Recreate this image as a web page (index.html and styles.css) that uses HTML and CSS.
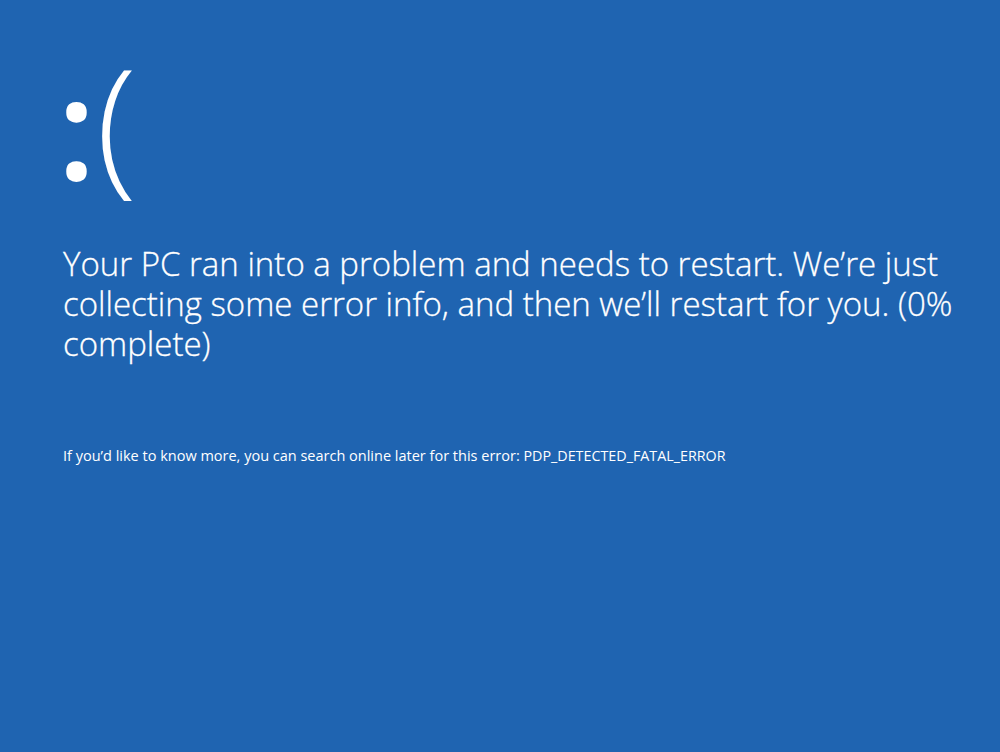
FILE: index.html
```html
<!DOCTYPE html>
<html lang="en">
<head>
  <meta charset="UTF-8">
  <meta name="viewport" content="width=device-width, initial-scale=1.0">
  <title>Your PC ran into a problem</title>
  <link rel="stylesheet" href="styles.css">
</head>
<body>
  <div class="screen">
    <div class="face"><span class="eyes">:</span><span class="mouth">(</span></div>
    <p class="message">Your PC ran into a problem and needs to restart. We’re just collecting some error info, and then we’ll restart for you. (0% complete)</p>
    <p class="details">If you’d like to know more, you can search online later for this error: <span class="code">PDP_DETECTED_FATAL_ERROR</span></p>
  </div>
</body>
</html>
```

FILE: styles.css
```css
body {
  margin: 0;
  background-color: #1f64b1;
  color: #fff;
  font-family: 'Open Sans', sans-serif;
  height: 100vh;
}
.screen {
  padding: 44px 30px 0 63px;
}
.face {
  font-size: 150px;
  line-height: 1;
  height: 200px;
  white-space: nowrap;
}
.eyes {
  font-size: 142px;
  font-weight: 600;
  margin-left: -6px;
  vertical-align: -3px;
}
.mouth {
  font-weight: 300;
}
.message {
  font-size: 33px;
  font-weight: 300;
  line-height: 40px;
  margin: 0 0 82px;
  max-width: 910px;
  -webkit-text-stroke: 0.3px #fff;
}
.details {
  font-size: 14.5px;
  margin: 0;
}
.code {
  font-size: 14.3px;
}
```
